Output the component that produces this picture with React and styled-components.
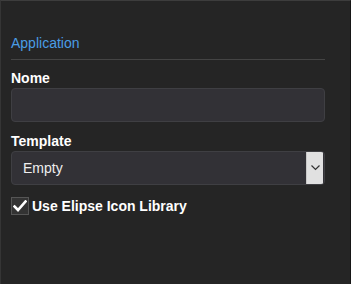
import React from 'react'
import styled, { createGlobalStyle } from 'styled-components'

const GlobalStyle = createGlobalStyle`
  html, body {
    margin: 0;
    padding: 0;
    background: #252525;
  }
  body {
    font-family: "Liberation Sans", Arial, sans-serif;
  }
`

const Panel = styled.div`
  box-sizing: border-box;
  width: 351px;
  height: 284px;
  background-color: #252525;
  border-top: 1px solid #3d3d3d;
  border-left: 1px solid #353535;
  border-right: 1px solid #161616;
  padding: 32px 25px 0 10px;
`

const Heading = styled.div`
  color: #4a9de6;
  font-size: 14px;
  line-height: 20px;
  padding-bottom: 6px;
  border-bottom: 1px solid #444;
  margin-bottom: 8px;
`

const Field = styled.div`
  display: flex;
  flex-direction: column;
  margin-bottom: ${props => props.gap || 9}px;
`

const Label = styled.label`
  color: #fff;
  font-size: 14px;
  font-weight: bold;
  line-height: 20px;
`

const TextInput = styled.input`
  box-sizing: border-box;
  height: 34px;
  width: 100%;
  background-color: #323136;
  border: 1px solid #3f3f43;
  border-radius: 4px;
  color: #eee;
  font-family: inherit;
  font-size: 14px;
  padding: 0 12px;
  outline: none;
`

const SelectBox = styled.div`
  box-sizing: border-box;
  height: 34px;
  display: flex;
  align-items: stretch;
  background-color: #323136;
  border: 1px solid #3f3f43;
  border-radius: 4px;
  overflow: hidden;
`

const SelectValue = styled.div`
  flex: 1;
  display: flex;
  align-items: center;
  padding-left: 11px;
  color: #eee;
  font-size: 14px;
`

const ArrowButton = styled.div`
  width: 16px;
  margin: 0 1px 0 0;
  background-color: #e1e1e1;
  border-left: 1px solid #c8c8c8;
  display: flex;
  align-items: center;
  justify-content: center;
`

const CheckRow = styled.label`
  display: flex;
  align-items: center;
  gap: 3px;
  color: #fff;
  font-size: 14px;
  font-weight: bold;
`

const CheckBox = styled.span`
  box-sizing: border-box;
  width: 18px;
  height: 18px;
  background-color: #333;
  border: 1px solid #555;
  display: flex;
  align-items: center;
  justify-content: center;
`

export default function App() {
  return (
    <>
      <GlobalStyle />
      <Panel>
        <Heading>Application</Heading>
        <Field>
          <Label>Nome</Label>
          <TextInput type="text" />
        </Field>
        <Field gap={12}>
          <Label>Template</Label>
          <SelectBox>
            <SelectValue>Empty</SelectValue>
            <ArrowButton>
              <svg width="9" height="6" viewBox="0 0 9 6">
                <path d="M0.5 0.5 L4.5 4.5 L8.5 0.5" fill="none" stroke="#333" strokeWidth="1.2" />
              </svg>
            </ArrowButton>
          </SelectBox>
        </Field>
        <CheckRow>
          <CheckBox>
            <svg width="14" height="12" viewBox="0 0 14 12">
              <path d="M1.5 6.5 L5 10 L12.5 1.5" fill="none" stroke="#fff" strokeWidth="2.6" strokeLinecap="square" />
            </svg>
          </CheckBox>
          Use Elipse Icon Library
        </CheckRow>
      </Panel>
    </>
  )
}
